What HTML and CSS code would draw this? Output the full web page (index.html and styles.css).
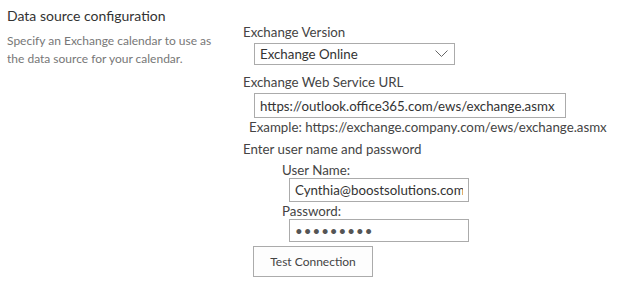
FILE: index.html
```html
<!DOCTYPE html>
<html lang="en">
<head>
  <meta charset="UTF-8">
  <title>Data source configuration</title>
  <link rel="stylesheet" href="styles.css">
</head>
<body>
  <div class="section">
    <div class="section-info">
      <h3>Data source configuration</h3>
      <p>Specify an Exchange calendar to use as the data source for your calendar.</p>
    </div>
    <div class="section-body">
      <div class="field-label">Exchange Version</div>
      <div class="select-box">
        <span>Exchange Online</span>
        <svg width="13" height="8" viewBox="0 0 13 8"><path d="M0.5 0.5 L6.5 6.5 L12.5 0.5" fill="none" stroke="#666" stroke-width="1"/></svg>
      </div>

      <div class="field-label">Exchange Web Service URL</div>
      <input type="text" class="text-input url-input" value="https://outlook.office365.com/ews/exchange.asmx">
      <div class="hint">Example: https://exchange.company.com/ews/exchange.asmx</div>

      <div class="field-label cred-title">Enter user name and password</div>
      <div class="credentials">
        <div class="sub-label">User Name:</div>
        <input type="text" class="text-input cred-input" value="Cynthia@boostsolutions.com">
        <div class="sub-label">Password:</div>
        <input type="password" class="text-input cred-input pwd" value="123456789">
      </div>

      <button class="test-btn">Test Connection</button>
    </div>
  </div>
</body>
</html>
```

FILE: styles.css
```css
body { margin: 0; background: #fff; font-family: Lato, "Open Sans", sans-serif; color: #444; }
.section { display: flex; padding: 6px 0 0 7px; }
.section-info { width: 236px; flex-shrink: 0; }
.section-info h3 { margin: 0; font-size: 14px; font-weight: normal; color: #333; line-height: 20px; }
.section-info p { margin: 6px 0 0; font-size: 12px; color: #777; line-height: 18px; width: 205px; }
.section-body { padding-top: 17px; font-size: 13.3px; }
.field-label { line-height: 18px; color: #444; white-space: nowrap; }
.cred-title { margin-top: 4px; }
.select-box { display: flex; align-items: center; justify-content: space-between; box-sizing: border-box; width: 201px; height: 22px; margin: 2px 0 8px 11px; padding: 0 6px 0 5px; border: 1px solid #ababab; color: #333; }
.text-input { display: block; box-sizing: border-box; border: 1px solid #ababab; font-family: inherit; font-size: 13.3px; color: #333; padding: 0 5px; outline: none; }
.url-input { width: 312px; height: 25px; margin: 2px 0 0 11px; }
.hint { margin-left: 6px; line-height: 18px; color: #444; white-space: nowrap; }
.credentials { padding-left: 39px; margin-top: 4px; }
.sub-label { line-height: 16px; }
.cred-input { width: 180px; height: 24px; margin: 0 0 1px 7px; }
.cred-input.pwd { height: 23px; letter-spacing: 1px; color: #555; }
.test-btn { display: block; margin: 4px 0 0 10px; width: 120px; height: 31px; background: #fdfdfd; border: 1px solid #ababab; font-family: inherit; font-size: 12px; color: #444; }
```
